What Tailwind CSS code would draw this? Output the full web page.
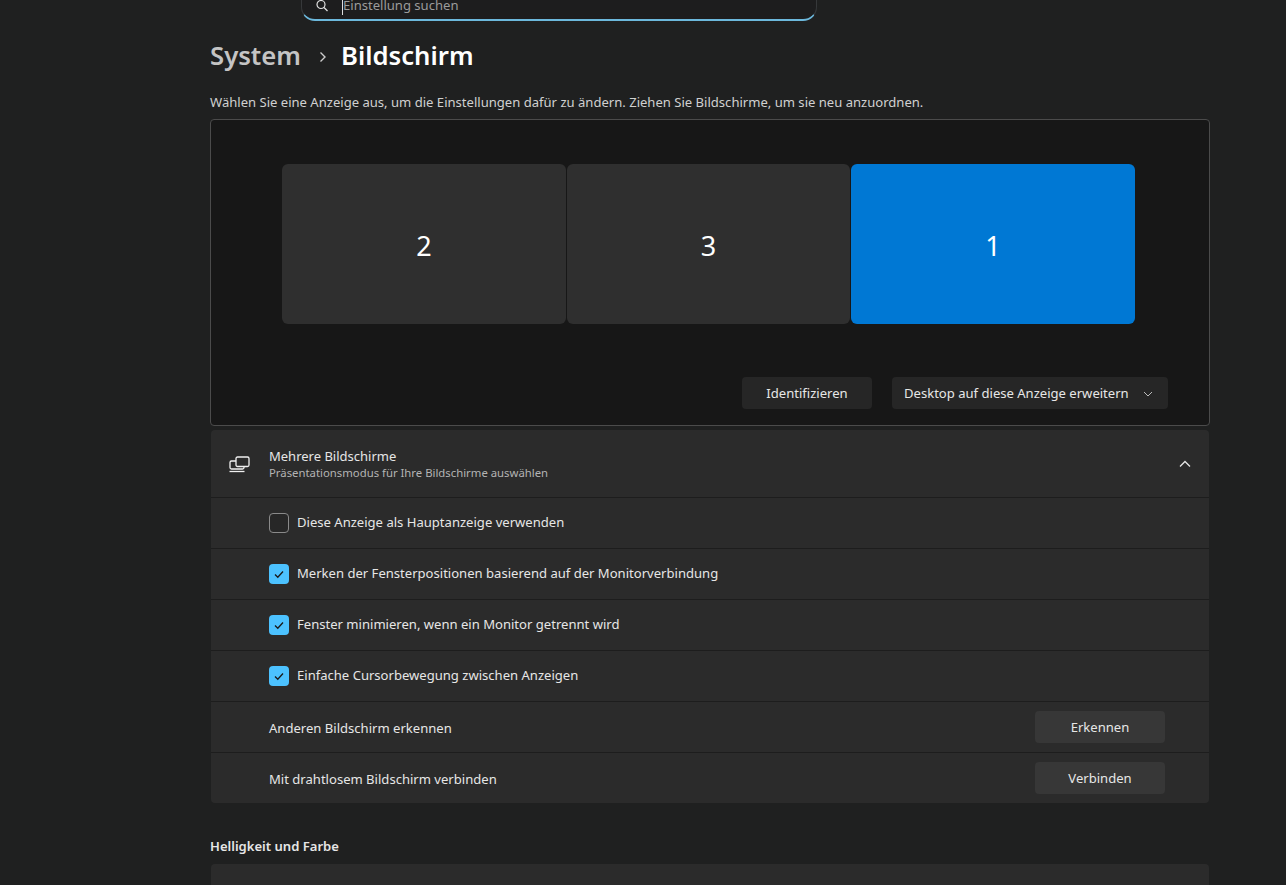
<!DOCTYPE html>
<html lang="de">
<head>
    <meta charset="UTF-8">
    <meta name="viewport" content="width=device-width, initial-scale=1.0">
    <title>Einstellungen - Bildschirm</title>
    <script src="https://cdn.jsdelivr.net/npm/@tailwindcss/browser@4"></script>
</head>
<body class="h-[885px] overflow-hidden bg-[#1f2020] text-[13.07px] text-[#e6e6e6] font-['Noto_Sans',sans-serif]">
    <main class="ml-[210px] w-[1000px]">
        <!-- search box runs off the top edge -->
        <div class="ml-[91px] flex h-[29px] w-[516px] -mt-[8px] items-center rounded-b-[14px] border border-[#36383a] border-b-2 border-b-[#6cb8dc] bg-[#1d1d1e] pl-[13px]">
            <svg class="h-[14px] w-[14px] text-[#e0e0e0]" viewBox="0 0 14 14" fill="none" stroke="currentColor" stroke-width="1.2"><circle cx="6" cy="5.5" r="4"/><path d="M9 8.5l3.5 3.5"/></svg>
            <span class="ml-[13px] h-[17px] w-px bg-[#ddd]"></span>
            <span class="text-[#9b9b9b]">Einstellung suchen</span>
        </div>

        <h1 class="mt-[15px] flex h-[40px] items-center pt-[1px] text-[25.7px] font-semibold">
            <span class="text-[#c4c4c4]">System</span>
            <svg class="ml-[17px] mr-[13px] h-[10px] w-[10px] text-[#ccc]" viewBox="0 0 10 10" fill="none" stroke="currentColor" stroke-width="1.4"><path d="M2.5 0.5l4.5 4.5-4.5 4.5"/></svg>
            <span class="text-white">Bildschirm</span>
        </h1>

        <p class="mt-[16px] h-[20px] leading-5 text-[#d0d0d0]">Wählen Sie eine Anzeige aus, um die Einstellungen dafür zu ändern. Ziehen Sie Bildschirme, um sie neu anzuordnen.</p>

        <!-- monitor arrangement -->
        <section class="mt-[7px] h-[307px] rounded-[4px] border border-[#4b4b4b] bg-[#171717] pt-[44px]">
            <div class="ml-[71px] flex h-[160px] gap-px text-[27px] text-white">
                <div class="flex w-[284px] items-center justify-center rounded-[6px] bg-[#2f2f2f] pt-[5px]">2</div>
                <div class="flex w-[283px] items-center justify-center rounded-[6px] bg-[#2f2f2f] pt-[5px]">3</div>
                <div class="flex w-[284px] items-center justify-center rounded-[6px] bg-[#0078d4] pt-[5px]">1</div>
            </div>
            <div class="mt-[53px] flex justify-end gap-[20px] pr-[41px]">
                <button class="h-[32px] w-[130px] rounded-[4px] bg-[#262626] pt-[1px]">Identifizieren</button>
                <button class="flex h-[32px] w-[276px] items-center justify-between whitespace-nowrap rounded-[4px] bg-[#262626] pl-[12px] pr-[15px] pt-[1px]">
                    Desktop auf diese Anzeige erweitern
                    <svg class="h-[10px] w-[10px] text-[#bbb]" viewBox="0 0 10 10" fill="none" stroke="currentColor"><path d="M1 3l4 4 4-4"/></svg>
                </button>
            </div>
        </section>

        <section class="mx-px mt-[4px] h-[373px] rounded-[4px] bg-[#2b2b2b]">
            <div class="flex h-[68px] items-center border-b border-[#1d1d1d] pl-[17px] pr-[17px]">
                <svg class="h-[22px] w-[22px] text-[#f0f0f0]" viewBox="0 0 22 22" fill="none" stroke="currentColor" stroke-width="1.3"><rect x="8" y="4" width="13" height="9.5" rx="1.5"/><path d="M8 8H3.5A1.5 1.5 0 0 0 2 9.5v5A1.5 1.5 0 0 0 3.5 16h11a1.5 1.5 0 0 0 1.5-1.5v-1"/><path d="M1.5 18.5h15"/></svg>
                <div class="ml-[19px]">
                    <div class="leading-[18px] text-[13px]">Mehrere Bildschirme</div>
                    <div class="text-[11.33px] leading-[16px] text-[#b4b4b4]">Präsentationsmodus für Ihre Bildschirme auswählen</div>
                </div>
                <svg class="ml-auto mr-[1px] h-[12px] w-[12px] text-[#e6e6e6]" viewBox="0 0 12 12" fill="none" stroke="currentColor" stroke-width="1.3"><path d="M1 8.5l5-5 5 5"/></svg>
            </div>
            <label class="flex h-[51px] items-center gap-[8px] border-b border-[#1d1d1d] pl-[58px]">
                <span class="h-[20px] w-[20px] rounded-[4px] border border-[#8a8a8a] bg-[#272727]"></span>
                Diese Anzeige als Hauptanzeige verwenden
            </label>
            <label class="flex h-[51px] items-center gap-[8px] border-b border-[#1d1d1d] pl-[58px]">
                <span class="flex h-[20px] w-[20px] items-center justify-center rounded-[4px] bg-[#4cc2ff]">
                    <svg class="h-[12px] w-[12px] text-[#1a1a1a]" viewBox="0 0 12 12" fill="none" stroke="currentColor" stroke-width="1.3"><path d="M2 6.5l2.8 2.8L10 3.5"/></svg>
                </span>
                Merken der Fensterpositionen basierend auf der Monitorverbindung
            </label>
            <label class="flex h-[51px] items-center gap-[8px] border-b border-[#1d1d1d] pl-[58px]">
                <span class="flex h-[20px] w-[20px] items-center justify-center rounded-[4px] bg-[#4cc2ff]">
                    <svg class="h-[12px] w-[12px] text-[#1a1a1a]" viewBox="0 0 12 12" fill="none" stroke="currentColor" stroke-width="1.3"><path d="M2 6.5l2.8 2.8L10 3.5"/></svg>
                </span>
                Fenster minimieren, wenn ein Monitor getrennt wird
            </label>
            <label class="flex h-[51px] items-center gap-[8px] border-b border-[#1d1d1d] pl-[58px]">
                <span class="flex h-[20px] w-[20px] items-center justify-center rounded-[4px] bg-[#4cc2ff]">
                    <svg class="h-[12px] w-[12px] text-[#1a1a1a]" viewBox="0 0 12 12" fill="none" stroke="currentColor" stroke-width="1.3"><path d="M2 6.5l2.8 2.8L10 3.5"/></svg>
                </span>
                Einfache Cursorbewegung zwischen Anzeigen
            </label>
            <div class="flex h-[51px] items-center justify-between border-b border-[#1d1d1d] pl-[58px] pr-[44px]">
                <span class="pt-[3px]">Anderen Bildschirm erkennen</span>
                <button class="h-[32px] w-[130px] rounded-[4px] bg-[#373737] pt-[1px]">Erkennen</button>
            </div>
            <div class="flex h-[50px] items-center justify-between pl-[58px] pr-[44px]">
                <span class="pt-[3px]">Mit drahtlosem Bildschirm verbinden</span>
                <button class="h-[32px] w-[130px] rounded-[4px] bg-[#373737] pt-[1px]">Verbinden</button>
            </div>
        </section>

        <h2 class="mt-[33px] h-[20px] leading-5 font-semibold">Helligkeit und Farbe</h2>
        <section class="mx-px mt-[8px] h-[80px] rounded-[4px] bg-[#2b2b2b] pl-[58px] pt-[16px] leading-5">Helligkeit</section>
    </main>
</body>
</html>
